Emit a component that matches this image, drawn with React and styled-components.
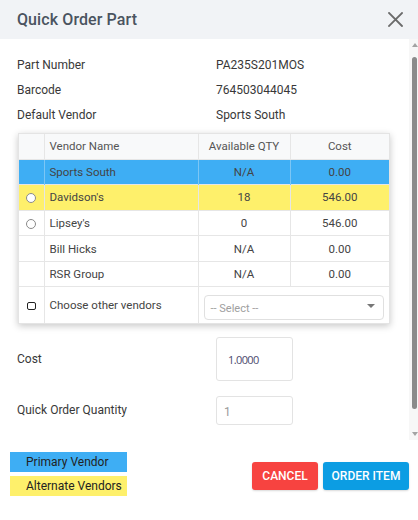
import React from "react";
import styled, { createGlobalStyle } from "styled-components";

const Global = createGlobalStyle`
  html, body { margin: 0; padding: 0; background: #fff; }
  body { font-family: Roboto, "Liberation Sans", sans-serif; }
  * { box-sizing: border-box; }
`;

const Modal = styled.div`
  width: 418px;
  height: 520px;
  display: flex;
  flex-direction: column;
  background: #fff;
  color: #333;
  font-size: 12px;
`;

const Header = styled.div`
  height: 39px;
  flex: none;
  display: flex;
  align-items: center;
  justify-content: space-between;
  padding: 0 14px 0 17px;
  background: #f1f3f6;
`;

const Title = styled.h1`
  margin: 0;
  font-size: 16px;
  font-weight: 500;
  color: #4a5360;
  letter-spacing: 0.1px;
`;

const CloseBtn = styled.button`
  border: 0;
  background: none;
  padding: 0;
  width: 18px;
  height: 18px;
  display: flex;
  align-items: center;
  justify-content: center;
  cursor: pointer;
`;

const ScrollArea = styled.div`
  height: 401px;
  flex: none;
  display: flex;
`;

const Content = styled.div`
  flex: 1;
  padding: 13px 19px 0 17px;
  overflow: hidden;
`;

const Scrollbar = styled.div`
  width: 9px;
  flex: none;
  background: #f7f7f7;
  display: flex;
  flex-direction: column;
  align-items: center;
  padding: 4px 0 4px 2px;
`;

const Arrow = styled.div`
  width: 0;
  height: 0;
  border-left: 3px solid transparent;
  border-right: 3px solid transparent;
  ${(p) =>
    p.$up
      ? "border-bottom: 4px solid #a3a3a3;"
      : "border-top: 4px solid #a3a3a3;"}
`;

const Thumb = styled.div`
  width: 5px;
  height: 352px;
  margin: 10px 0 0;
  border-radius: 3px;
  background: #8b8b8b;
`;

const Spacer = styled.div`
  flex: 1;
`;

const InfoRow = styled.div`
  height: 25px;
  display: flex;
  align-items: center;
`;

const Label = styled.div`
  width: 199px;
  flex: none;
  color: #383838;
`;

const Value = styled.div`
  color: #383838;
`;

const Card = styled.div`
  margin: 6px 0 0 1px;
  width: 372px;
  border: 1px solid #e4e4e4;
  box-shadow: 0 2px 7px rgba(0, 0, 0, 0.22);
  background: #fff;
`;

const Table = styled.table`
  width: 100%;
  border-collapse: collapse;
  table-layout: fixed;
  font-size: 11.5px;
`;

const Th = styled.th`
  height: 25px;
  font-weight: 400;
  color: #555;
  background: #f8f9fa;
  text-align: ${(p) => p.$align || "center"};
  padding: 0 5px;
  border-left: 1px solid #e6e6e6;
  &:first-child { border-left: 0; }
`;

const Tr = styled.tr`
  background: ${(p) => p.$bg || "#fff"};
  border-top: 1px solid #e6e6e6;
`;

const Td = styled.td`
  height: ${(p) => p.$h || 25.6}px;
  padding: 0 5px;
  color: #444;
  text-align: ${(p) => p.$align || "center"};
  border-left: 1px solid ${(p) => p.$line || "#e6e6e6"};
  &:first-child { border-left: 0; }
`;

const Radio = styled.span`
  display: inline-block;
  width: 10px;
  height: 10px;
  border-radius: 50%;
  border: 1px solid #8a8a8a;
  background: #fff;
  vertical-align: middle;
`;

const Check = styled.span`
  display: inline-block;
  width: 9px;
  height: 8px;
  border-radius: 2px;
  border: 1.5px solid #222;
  background: #fff;
  vertical-align: middle;
`;

const Select = styled.div`
  height: 25px;
  margin: 7px 0 3px 0;
  border: 1px solid #e0e0e0;
  border-radius: 4px;
  display: flex;
  align-items: center;
  justify-content: space-between;
  padding: 2px 8px 0 6px;
  color: #a0a0a0;
  font-size: 11px;
  text-align: left;
`;

const Caret = styled.span`
  width: 0;
  height: 0;
  border-left: 4px solid transparent;
  border-right: 4px solid transparent;
  border-top: 4px solid #777;
  margin-top: -4px;
`;

const FieldRow = styled.div`
  display: flex;
  align-items: center;
  margin-top: ${(p) => p.$mt}px;
`;

const Input = styled.div`
  width: 77px;
  height: ${(p) => p.$h}px;
  border: 1px solid #e3e3e3;
  border-radius: 3px;
  display: flex;
  align-items: center;
  padding: ${(p) => (p.$dim ? "4px 0 0 7px" : "2px 0 0 11px")};
  font-family: ${(p) => (p.$dim ? "Roboto" : "\"Open Sans\"")}, "Liberation Sans", sans-serif;
  font-size: ${(p) => (p.$dim ? 12 : 11)}px;
  letter-spacing: ${(p) => (p.$dim ? 0 : -0.6)}px;
  color: ${(p) => (p.$dim ? "#9a9a9a" : "#4d4a6e")};
`;

const Footer = styled.div`
  flex: 1;
  display: flex;
  justify-content: space-between;
  align-items: flex-start;
  padding: 12px 9px 0 10px;
`;

const Legend = styled.div`
  display: flex;
  flex-direction: column;
  gap: 4px;
`;

const LegendItem = styled.div`
  width: 117px;
  height: 20px;
  background: ${(p) => p.$bg};
  color: #222;
  font-size: 12px;
  display: flex;
  align-items: center;
  padding-left: 16px;
`;

const Buttons = styled.div`
  display: flex;
  gap: 5px;
  margin-top: 10px;
`;

const Button = styled.button`
  height: 28px;
  width: ${(p) => p.$w}px;
  border: 0;
  border-radius: 3px;
  background: ${(p) => p.$bg};
  color: #fff;
  font-family: Roboto, "Liberation Sans", sans-serif;
  font-size: 12px;
  font-weight: 500;
  text-transform: uppercase;
  box-shadow: 0 1px 2px rgba(0, 0, 0, 0.15);
  padding: 0;
  cursor: pointer;
`;

const BLUE = "#3eaef4";
const YELLOW = "#fef06b";

const vendors = [
  { name: "Sports South", qty: "N/A", cost: "0.00", bg: BLUE, mark: null },
  { name: "Davidson's", qty: "18", cost: "546.00", bg: YELLOW, mark: "radio" },
  { name: "Lipsey's", qty: "0", cost: "546.00", mark: "radio" },
  { name: "Bill Hicks", qty: "N/A", cost: "0.00", mark: null },
  { name: "RSR Group", qty: "N/A", cost: "0.00", mark: null },
];

export default function App() {
  return (
    <>
      <Global />
      <Modal>
        <Header>
          <Title>Quick Order Part</Title>
          <CloseBtn aria-label="Close">
            <svg width="15" height="15" viewBox="0 0 15 15">
              <path d="M1 1 L14 14 M14 1 L1 14" stroke="#6b6b6b" strokeWidth="1.8" strokeLinecap="square" />
            </svg>
          </CloseBtn>
        </Header>
        <ScrollArea>
          <Content>
            <InfoRow>
              <Label>Part Number</Label>
              <Value>PA235S201MOS</Value>
            </InfoRow>
            <InfoRow>
              <Label>Barcode</Label>
              <Value>764503044045</Value>
            </InfoRow>
            <InfoRow>
              <Label>Default Vendor</Label>
              <Value>Sports South</Value>
            </InfoRow>
            <Card>
              <Table>
                <colgroup>
                  <col style={{ width: 25 }} />
                  <col style={{ width: 154 }} />
                  <col style={{ width: 92 }} />
                  <col />
                </colgroup>
                <thead>
                  <tr>
                    <Th />
                    <Th $align="left">Vendor Name</Th>
                    <Th>Available QTY</Th>
                    <Th>Cost</Th>
                  </tr>
                </thead>
                <tbody>
                  {vendors.map((v) => (
                    <Tr key={v.name} $bg={v.bg}>
                      <Td $line={v.bg === BLUE ? "#7cc6f5" : undefined}>{v.mark === "radio" && <Radio />}</Td>
                      <Td $align="left" $line={v.bg === BLUE ? "#7cc6f5" : undefined}>{v.name}</Td>
                      <Td $line={v.bg === BLUE ? "#7cc6f5" : undefined}>{v.qty}</Td>
                      <Td $line={v.bg === BLUE ? "#7cc6f5" : undefined}>{v.cost}</Td>
                    </Tr>
                  ))}
                  <Tr>
                    <Td $h={36}><Check /></Td>
                    <Td $align="left">Choose other vendors</Td>
                    <Td colSpan={2} style={{ borderLeft: "1px solid #e6e6e6" }}>
                      <Select>
                        <span>-- Select --</span>
                        <Caret />
                      </Select>
                    </Td>
                  </Tr>
                </tbody>
              </Table>
            </Card>
            <FieldRow $mt={13}>
              <Label>Cost</Label>
              <Input $h={44}>1.0000</Input>
            </FieldRow>
            <FieldRow $mt={15}>
              <Label>Quick Order Quantity</Label>
              <Input $h={29} $dim>1</Input>
            </FieldRow>
          </Content>
          <Scrollbar>
            <Arrow $up />
            <Thumb />
            <Spacer />
            <Arrow />
          </Scrollbar>
        </ScrollArea>
        <Footer>
          <Legend>
            <LegendItem $bg={BLUE}>Primary Vendor</LegendItem>
            <LegendItem $bg={YELLOW}>Alternate Vendors</LegendItem>
          </Legend>
          <Buttons>
            <Button $w={66} $bg="#f74340">Cancel</Button>
            <Button $w={86} $bg="#0c9de3">Order Item</Button>
          </Buttons>
        </Footer>
      </Modal>
    </>
  );
}
